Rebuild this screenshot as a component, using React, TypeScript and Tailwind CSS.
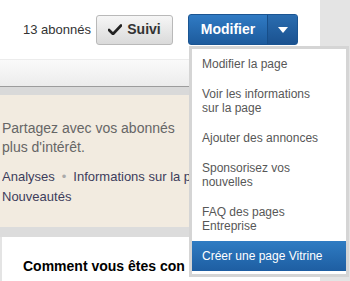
import React from "react";

const menuItems = [
  "Modifier la page",
  "Voir les informations sur la page",
  "Ajouter des annonces",
  "Sponsorisez vos nouvelles",
  "FAQ des pages Entreprise",
];

export default function App() {
  return (
    <div
      className="relative flex w-[350px] h-[281px] overflow-hidden bg-[#e4e4e4]"
      style={{ fontFamily: '"Liberation Sans", Arial, sans-serif' }}
    >
      {/* Main column */}
      <div className="w-[320px] flex flex-col shrink-0">
        {/* Header */}
        <div className="h-[60px] bg-white flex items-center justify-end pr-[22px] border-b border-[#ececec]">
          <span className="text-[13px] text-[#333] mr-[5px]">13 abonnés</span>
          <button className="w-[77px] h-[30px] flex items-center justify-center gap-[5px] rounded-[3px] border border-[#b9b9b9] bg-gradient-to-b from-[#f6f6f6] to-[#dadada] text-[14px] font-bold text-[#333]">
            <svg width="14" height="11" viewBox="0 0 14 11">
              <path d="M1 6 L5 10 L13 1.5" fill="none" stroke="#222" strokeWidth="2.6" strokeLinecap="round" strokeLinejoin="round" />
            </svg>
            Suivi
          </button>
          <div className="ml-[15px] flex h-[31px] rounded-[3px] overflow-hidden bg-gradient-to-b from-[#307bc4] to-[#1d5b9d] border border-[#1b5592]">
            <div className="w-[78px] flex items-center justify-center text-[14px] font-bold text-white">
              Modifier
            </div>
            <div className="w-[30px] flex items-center justify-center border-l border-[#174e89] bg-gradient-to-b from-[#2a6db0] to-[#1b5290]">
              <svg width="10" height="6" viewBox="0 0 10 6">
                <path d="M0 0 L10 0 L5 6 Z" fill="#fff" />
              </svg>
            </div>
          </div>
        </div>

        {/* Tab band */}
        <div className="h-[27px] bg-gradient-to-b from-[#fafafa] to-[#ececec] border-b border-[#9c9c9c]" />
        <div className="h-[8px] bg-[#d9d9d9]" />

        {/* Beige panel */}
        <div className="h-[132px] bg-[#f2ebe0] pl-[2px] pt-[24px]">
          <div className="w-[187px] overflow-hidden whitespace-nowrap">
            <p className="text-[14px] leading-[19px] text-[#666]">
              Partagez avec vos abonnés
              <br />
              plus d'intérêt.
            </p>
            <div className="mt-[10px] text-[13px] leading-[20px] text-[#3d3d5c]">
              <span>Analyses</span>
              <span className="text-[#aaa] mx-[7px]">•</span>
              <span>Informations sur la p</span>
              <br />
              <span>Nouveautés</span>
            </div>
          </div>
        </div>
        <div className="h-[10px] bg-[#dcdcdc]" />

        {/* Card */}
        <div className="flex-1 ml-[2px] bg-white pt-[19px] pl-[21px]">
          <div className="w-[166px] overflow-hidden whitespace-nowrap">
            <p className="text-[14px] font-bold text-black">Comment vous êtes con</p>
          </div>
        </div>
      </div>
      <div className="flex-1" />

      {/* Dropdown menu */}
      <div className="absolute left-[189px] top-[46px] w-[160px] bg-white border-[3px] border-[#d5d5d5] pb-[3px]">
        {menuItems.map((item) => (
          <div key={item} className="pl-[10px] pr-[12px] py-[8px] text-[12px] leading-[14px] text-[#575757]">
            {item === "Voir les informations sur la page" ? (
              <>Voir les informations<br />sur la page</>
            ) : item === "Sponsorisez vos nouvelles" ? (
              <>Sponsorisez vos<br />nouvelles</>
            ) : item === "FAQ des pages Entreprise" ? (
              <>FAQ des pages<br />Entreprise</>
            ) : (
              item
            )}
          </div>
        ))}
        <div className="pl-[10px] h-[30px] flex items-center text-[12px] text-white bg-gradient-to-b from-[#2f7cc3] to-[#1e5ea2]">
          Créer une page Vitrine
        </div>
      </div>
    </div>
  );
}
